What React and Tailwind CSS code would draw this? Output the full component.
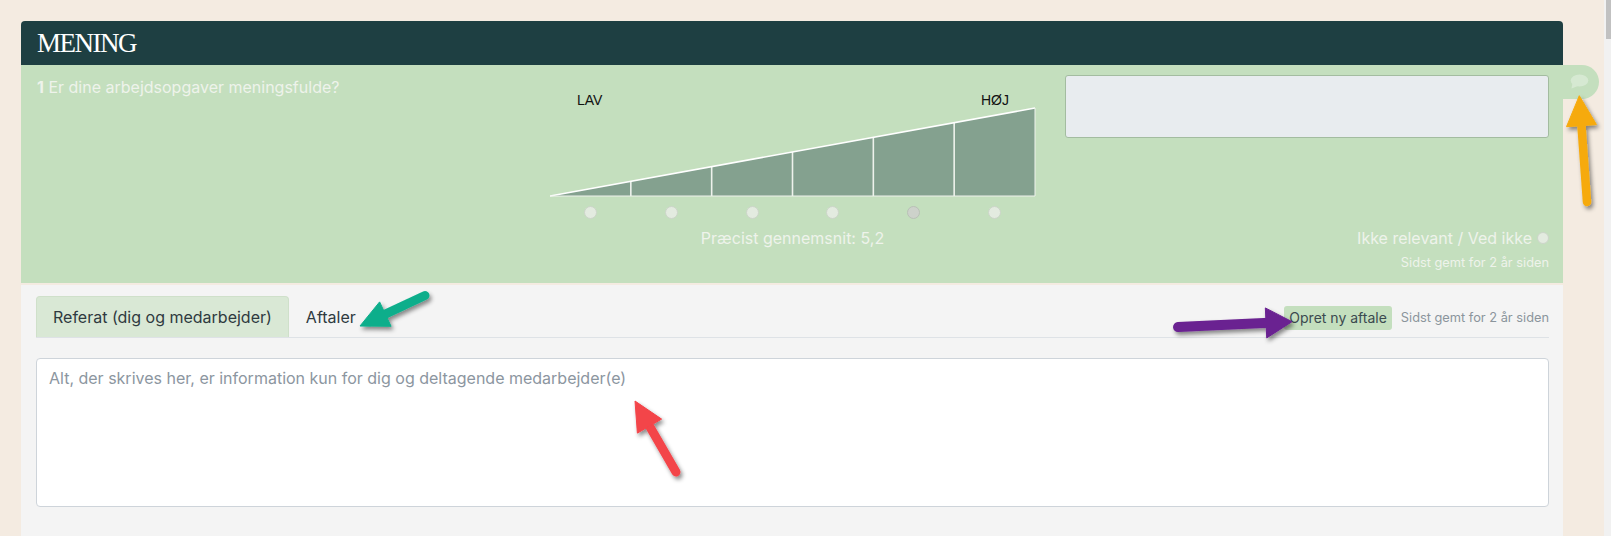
const SEG = 485 / 6;

function Arrow({ tail, tip, width, headLen, headHalf, color }) {
  const dx = tip[0] - tail[0];
  const dy = tip[1] - tail[1];
  const len = Math.hypot(dx, dy);
  const ux = dx / len;
  const uy = dy / len;
  const bx = tip[0] - ux * headLen;
  const by = tip[1] - uy * headLen;
  const head = [
    [tip[0], tip[1]],
    [bx - uy * headHalf, by + ux * headHalf],
    [bx + uy * headHalf, by - ux * headHalf],
  ]
    .map((p) => p.join(','))
    .join(' ');

  return (
    <g filter="url(#arrow-shadow)">
      <line
        x1={tail[0]}
        y1={tail[1]}
        x2={bx + ux * 3}
        y2={by + uy * 3}
        stroke={color}
        strokeWidth={width}
        strokeLinecap="round"
      />
      <polygon points={head} fill={color} strokeLinejoin="round" stroke={color} strokeWidth="1" />
    </g>
  );
}

function Ramp() {
  const h = 88;
  return (
    <svg width="486" height="90" viewBox="0 -1 486 90" className="block">
      <polygon points={`0,${h} 485,0 485,${h}`} fill="#84a18f" />
      {[1, 2, 3, 4, 5].map((i) => {
        const x = SEG * i;
        return (
          <line key={i} x1={x} y1={h} x2={x} y2={h - (h * x) / 485} stroke="#eef2ec" strokeWidth="1.6" />
        );
      })}
      <line x1="0" y1={h} x2="485" y2="0" stroke="#ffffff" strokeWidth="1.6" />
      <line x1="0" y1={h} x2="485" y2={h} stroke="#eef2ec" strokeWidth="1.2" />
      <line x1="485" y1="0" x2="485" y2={h} stroke="#eef2ec" strokeWidth="1" />
    </svg>
  );
}

function Dot({ selected }) {
  return (
    <span
      className={
        selected
          ? 'block h-[13px] w-[13px] rounded-full border border-[#b9c1b7] bg-[#cdd2cb]'
          : 'block h-[13px] w-[13px] rounded-full border border-[#ccd5c9] bg-[#e3ebe0]'
      }
    />
  );
}

export default function App() {
  return (
    <div className="relative flex h-[536px] w-[1611px] overflow-hidden bg-[#f4ebe1] font-['Inter',sans-serif]">
      <div className="flex-1 pl-[21px] pt-[21px]">
        <div className="w-[1542px]">
          <header className="flex h-[44px] items-center rounded-t-[4px] bg-[#1e3f42] pl-4">
            <h2 className="font-['Liberation_Serif',serif] text-[27px] leading-[31px] tracking-[-1.5px] text-white">
              MENING
            </h2>
          </header>

          <section className="relative mb-[2px] flex h-[218px] bg-[#c4dfbe] pl-4 pr-[14px] pt-[10px]">
            <div className="flex-1 pt-px text-[16px] leading-[22px] text-[#eef3eb]">
              <b className="font-bold">1</b> Er dine arbejdsopgaver meningsfulde?
            </div>

            <div className="w-[485px]">
              <div className="mt-[18px] flex justify-between pl-[27px] pr-[26px] font-['Liberation_Sans',sans-serif] text-[14px] leading-[14px] text-[#111]">
                <span>LAV</span>
                <span>HØJ</span>
              </div>
              <Ramp />
              <div className="mt-[9px] grid grid-cols-6">
                {[0, 1, 2, 3, 4, 5].map((i) => (
                  <div key={i} className="flex justify-center">
                    <Dot selected={i === 4} />
                  </div>
                ))}
              </div>
              <p className="mt-[8px] text-center text-[16px] leading-[22px] text-[#eef3eb]">Præcist gennemsnit: 5,2</p>
            </div>

            <div className="ml-[30px] flex w-[484px] flex-col pb-[11px]">
              <div className="h-[63px] rounded-[3px] border border-[#a3bca0] bg-[#e8ecef]" />
              <div className="mt-auto flex items-center justify-end gap-[5px] text-[16px] leading-[22px] text-[#eef3eb]">
                <span>Ikke relevant / Ved ikke</span>
                <span className="block h-[12px] w-[12px] rounded-full border border-[#ccd5c9] bg-[#e3ebe0]" />
              </div>
              <div className="mt-[5px] text-right text-[12.8px] leading-[18px] text-[#eef3eb]">Sidst gemt for 2 år siden</div>
            </div>

            <div className="absolute left-full top-0 flex h-[34px] w-[36px] items-center rounded-r-full bg-[#c4dfbe] pl-[7px]">
              <svg width="19" height="16" viewBox="0 0 19 16">
                <ellipse cx="9.5" cy="6.5" rx="8.8" ry="6" fill="#d6e9d2" />
                <polygon points="2.5,9 1.5,14.5 8,12" fill="#d6e9d2" />
              </svg>
            </div>
          </section>

          <section className="h-[260px] bg-[#f4f4f4] pl-[15px] pr-[14px] pt-[11px]">
            <div className="flex items-end border-b border-[#dee2e6]">
              <button className="rounded-t-[4px] border border-b-0 border-[#cfe0ca] bg-[#d9e8d5] px-[16px] pb-[8px] pt-[8px] text-[16px] leading-[24px] text-[#2f3a40]">
                Referat (dig og medarbejder)
              </button>
              <button className="border border-b-0 border-transparent px-[16px] pb-[8px] pt-[8px] text-[16px] leading-[24px] text-[#2f3a40]">
                Aftaler
              </button>
              <div className="mb-[7px] ml-auto flex items-center gap-[9px]">
                <span className="rounded-[3px] bg-[#c4dfbe] px-[5px] py-[3px] text-[14px] leading-[18px] text-[#3b4a4f]">
                  Opret ny aftale
                </span>
                <span className="text-[12.8px] leading-[18px] text-[#8b959c]">Sidst gemt for 2 år siden</span>
              </div>
            </div>

            <div className="mt-[20px] h-[149px] rounded-[4px] border border-[#ced4da] bg-white px-[12px] pt-[7px] text-[16px] leading-[24px] text-[#8c969f]">
              Alt, der skrives her, er information kun for dig og deltagende medarbejder(e)
            </div>
          </section>
        </div>
      </div>

      <div className="w-[7px] bg-[#f1f1f1]">
        <div className="ml-[2px] h-[39px] bg-[#c1c1c1]" />
      </div>

      <svg className="pointer-events-none absolute left-0 top-0" width="1611" height="536" viewBox="0 0 1611 536">
        <defs>
          <filter id="arrow-shadow" x="-30%" y="-30%" width="160%" height="160%">
            <feDropShadow dx="2" dy="3" stdDeviation="2" floodColor="#000" floodOpacity="0.45" />
          </filter>
        </defs>
        <Arrow tail={[1587, 202]} tip={[1579.3, 95.7]} width={8.5} headLen={30} headHalf={15} color="#f6aa0c" />
        <Arrow tail={[425, 295.5]} tip={[360, 326]} width={9} headLen={28} headHalf={13.5} color="#0bae8b" />
        <Arrow tail={[1178, 327]} tip={[1292, 321.7]} width={10} headLen={26} headHalf={15} color="#6a2191" />
        <Arrow tail={[676, 472]} tip={[635, 401]} width={9} headLen={29} headHalf={14} color="#f34449" />
      </svg>
    </div>
  );
}
